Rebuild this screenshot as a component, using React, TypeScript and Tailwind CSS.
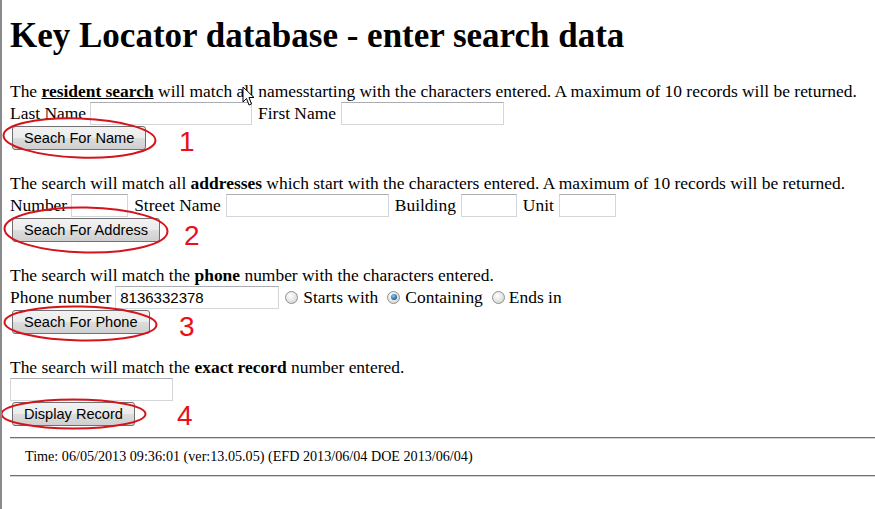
import React from 'react';

type Oval = { left: number; top: number; width: number; height: number; rotate?: number };

type ButtonRowProps = {
  label: string;
  num: string;
  numLeft: number;
  numTop: number;
  oval: Oval;
};

function TextBox({ width, value }: { width: number; value?: string }) {
  return (
    <input
      type="text"
      readOnly
      defaultValue={value}
      style={{ width }}
      className="h-[23px] border border-[#d3d6da] border-t-[#abadb3] bg-white px-[4px] font-['Liberation_Sans',Arial,sans-serif] text-[15px] text-black outline-none"
    />
  );
}

function Radio({ checked }: { checked?: boolean }) {
  return (
    <span className="inline-flex h-[13px] w-[13px] items-center justify-center rounded-full border border-[#8e8f8f] bg-[radial-gradient(circle_at_40%_35%,#ffffff,#dcdcdc_70%,#c4c4c4)]">
      {checked && (
        <span className="h-[6px] w-[6px] rounded-full bg-[radial-gradient(circle_at_40%_35%,#8fc8ef,#1f5f96_70%,#0d3c66)]" />
      )}
    </span>
  );
}

function ButtonRow({ label, num, numLeft, numTop, oval }: ButtonRowProps) {
  return (
    <div className="relative flex h-[26px] items-center">
      <button className="ml-[2px] h-[24px] rounded-[3px] border border-[#707070] bg-[linear-gradient(#f2f2f2,#ebebeb_50%,#dddddd_51%,#cfcfcf)] px-[11px] pt-[1px] font-['Liberation_Sans',Arial,sans-serif] text-[14.6px] leading-none text-black">
        {label}
      </button>
      {/* red annotation drawn over the screenshot */}
      <svg
        className="pointer-events-none absolute"
        style={{ left: oval.left, top: oval.top, width: oval.width, height: oval.height }}
        viewBox={`0 0 ${oval.width} ${oval.height}`}
      >
        <ellipse
          cx={oval.width / 2}
          cy={oval.height / 2}
          rx={oval.width / 2 - 1.5}
          ry={oval.height / 2 - 1.5}
          fill="none"
          stroke="#d4141c"
          strokeWidth={2}
          transform={`rotate(${oval.rotate ?? 0} ${oval.width / 2} ${oval.height / 2})`}
        />
      </svg>
      <span
        className="absolute font-['Liberation_Sans',Arial,sans-serif] text-[28px] leading-none text-[#e8101a]"
        style={{ left: numLeft, top: numTop }}
      >
        {num}
      </span>
    </div>
  );
}

export default function App() {
  return (
    <div className="relative min-h-[509px] overflow-hidden border-l-2 border-[#8a8a8a] bg-white pl-[8px] font-['Liberation_Serif','Times_New_Roman',serif] text-[17.45px] text-black">
      <h1 className="mt-[16px] h-[40px] text-[35px] font-bold leading-[40px]">
        Key Locator database - enter search data
      </h1>

      {/* resident search */}
      <p className="mt-[25px] leading-[20px]">
        The <b className="underline">resident search</b> will match all namesstarting with the characters entered. A
        maximum of 10 records will be returned.
      </p>
      <div className="flex h-[24px] items-center">
        <span>Last Name</span>
        <span className="ml-[4px]">
          <TextBox width={162} />
        </span>
        <span className="ml-[6px]">First Name</span>
        <span className="ml-[5px]">
          <TextBox width={163} />
        </span>
      </div>
      <ButtonRow
        label="Seach For Name"
        num="1"
        numLeft={169}
        numTop={3}
        oval={{ left: -8, top: -8, width: 155, height: 42, rotate: 2 }}
      />

      {/* address search */}
      <p className="mt-[22px] leading-[20px]">
        The search will match all <b>addresses</b> which start with the characters entered. A maximum of 10 records
        will be returned.
      </p>
      <div className="flex h-[24px] items-center">
        <span>Number</span>
        <span className="ml-[4px]">
          <TextBox width={57} />
        </span>
        <span className="ml-[6px]">Street Name</span>
        <span className="ml-[5px]">
          <TextBox width={163} />
        </span>
        <span className="ml-[6px]">Building</span>
        <span className="ml-[5px]">
          <TextBox width={56} />
        </span>
        <span className="ml-[6px]">Unit</span>
        <span className="ml-[5px]">
          <TextBox width={57} />
        </span>
      </div>
      <ButtonRow
        label="Seach For Address"
        num="2"
        numLeft={174}
        numTop={5}
        oval={{ left: -7, top: -11, width: 166, height: 48, rotate: 1 }}
      />

      {/* phone search */}
      <p className="mt-[22px] leading-[20px]">
        The search will match the <b>phone</b> number with the characters entered.
      </p>
      <div className="flex h-[24px] items-center">
        <span>Phone number</span>
        <span className="ml-[4px]">
          <TextBox width={164} value="8136332378" />
        </span>
        <span className="ml-[6px] flex items-center">
          <Radio />
        </span>
        <span className="ml-[5px]">Starts with</span>
        <span className="ml-[9px] flex items-center">
          <Radio checked />
        </span>
        <span className="ml-[5px]">Containing</span>
        <span className="ml-[9px] flex items-center">
          <Radio />
        </span>
        <span className="ml-[4px]">Ends in</span>
      </div>
      <ButtonRow
        label="Seach For Phone"
        num="3"
        numLeft={169}
        numTop={4}
        oval={{ left: -7, top: -4, width: 155, height: 37, rotate: 1 }}
      />

      {/* record number */}
      <p className="mt-[22px] leading-[20px]">
        The search will match the <b>exact record</b> number entered.
      </p>
      <div className="flex h-[24px] items-center">
        <TextBox width={163} />
      </div>
      <ButtonRow
        label="Display Record"
        num="4"
        numLeft={167}
        numTop={1}
        oval={{ left: -10, top: -3, width: 147, height: 32, rotate: 0 }}
      />

      <div className="mt-[10px] border-t border-b border-t-[#707070] border-b-[#d4d4d4]" />
      <div className="flex h-[36px] items-center pl-[15px] text-[14.15px]">
        Time: 06/05/2013 09:36:01 (ver:13.05.05) (EFD 2013/06/04 DOE 2013/06/04)
      </div>
      <div className="border-t border-b border-t-[#707070] border-b-[#d4d4d4]" />

      {/* mouse pointer captured in the screenshot */}
      <svg className="pointer-events-none absolute left-[240px] top-[86px]" width="13" height="21" viewBox="0 0 13 21">
        <path
          d="M1 1 L1 16 L4.5 12.5 L7 19 L9.5 18 L7 11.5 L12 11.5 Z"
          fill="#fff"
          stroke="#000"
          strokeWidth="1"
          strokeLinejoin="round"
        />
      </svg>
    </div>
  );
}
